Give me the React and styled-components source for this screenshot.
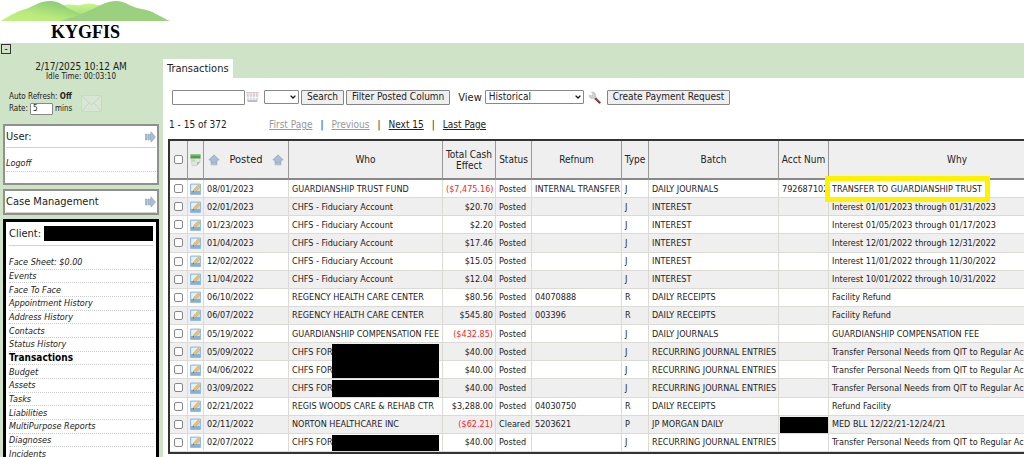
import React from 'react'
import styled, { createGlobalStyle } from 'styled-components'

const GlobalStyle = createGlobalStyle`
  * {
    box-sizing: border-box;
  }
  body {
    margin: 0;
    overflow: hidden;
    background: #cfe3c7;
    color: #222;
    font-family: 'DejaVu Sans Condensed', 'DejaVu Sans', Verdana, sans-serif;
    font-stretch: condensed;
    font-size: 10px;
  }
  button, input, select {
    font: inherit;
    color: inherit;
    margin: 0;
  }
`

const Page = styled.div`
  display: flex;
  flex-direction: column;
  height: 100vh;
  overflow: hidden;
`

const Header = styled.header`
  flex: none;
  height: 43px;
  background: #fff;
`

const Brand = styled.div`
  width: 171px;
  text-align: center;
`

const Hills = styled.svg`
  display: block;
  width: 171px;
  height: 22px;
`

const BrandName = styled.h1`
  margin: 0;
  color: #000;
  font: bold 18px/21px 'Liberation Serif', 'Times New Roman', serif;
`

const Body = styled.div`
  display: flex;
  flex: 1;
  min-height: 0;
`

const Sidebar = styled.aside`
  flex: none;
  width: 163px;
  padding: 1px 4px 0 3px;
`

const Collapse = styled.button`
  display: flex;
  align-items: center;
  justify-content: center;
  width: 10px;
  height: 10px;
  margin-left: -2px;
  padding: 0;
  border: 1px solid #333;
  background: transparent;
  line-height: 8px;
`

const Clock = styled.div`
  padding-top: 6px;
  text-align: center;
  font-size: 10px;
  line-height: 13px;
`

const Idle = styled.div`
  font-size: 8px;
  line-height: 8px;
`

const Refresh = styled.div`
  display: flex;
  align-items: center;
  gap: 9px;
  height: 26px;
  margin: 9px 0 8px 6px;
  font-size: 8px;
  line-height: 12px;
`

const RateLabel = styled.label`
  display: flex;
  align-items: center;
  gap: 2px;
`

const RateInput = styled.input`
  width: 23px;
  height: 12px;
  padding: 0 2px;
  border: 1px solid #888;
  border-radius: 1px;
  background: #fff;
`

const Box = styled.section`
  margin-bottom: 4px;
  padding: ${p => (p.$active ? '0 3px' : '0 1px')};
  border: ${p => (p.$active ? '3px solid #000' : '2px solid #8e918c')};
  background: #fff;
`

const BoxTitle = styled.h2`
  display: flex;
  align-items: center;
  justify-content: space-between;
  height: ${p => (p.$tall ? 24 : 22)}px;
  margin: 0;
  border-bottom: 1px solid #d6d2cb;
  font-size: 11px;
  font-weight: normal;
`

const ClientMask = styled.span`
  width: 109px;
  height: 15px;
  background: #000;
`

const UserMenu = styled.div`
  padding: 9px 0 11px;
`

const Menu = styled.ul`
  display: grid;
  grid-auto-rows: 1fr;
  height: 205px;
  margin: 10px 0 0;
  padding: 0;
  list-style: none;
`

const MenuItem = styled.li`
  display: flex;
  align-items: center;
  min-height: 0;
  border-bottom: 1px dotted #ccc;
`

const MenuLink = styled.a`
  color: ${p => (p.$current ? '#000' : '#222')};
  font-size: ${p => (p.$current ? 10 : 9)}px;
  font-style: ${p => (p.$current ? 'normal' : 'italic')};
  font-weight: ${p => (p.$current ? 'bold' : 'normal')};
  line-height: 12px;
  text-decoration: none;
`

const LogoffLink = styled(MenuLink)`
  display: block;
  padding-bottom: 2px;
  border-bottom: 1px dotted #ccc;
`

const Main = styled.main`
  display: flex;
  flex: 1;
  flex-direction: column;
  min-width: 0;
  padding-top: 16px;
`

const Tab = styled.div`
  align-self: flex-start;
  height: 19px;
  padding: 0 4px;
  background: #fff;
  font-size: 11px;
  line-height: 20px;
`

const Panel = styled.div`
  flex: 1;
  padding: 11px 0 0 5px;
  background: #fff;
`

const Toolbar = styled.form`
  display: flex;
  align-items: center;
  height: 16px;
  padding-left: 4px;
`

const FilterInput = styled.input`
  width: 73px;
  height: 15px;
  padding: 0 2px;
  border: 1px solid #888;
  border-radius: 1px;
`

const IconSlot = styled.span`
  display: flex;
  margin: ${p => p.$margin || 0};
`

const Select = styled.select`
  appearance: none;
  width: ${p => p.$width}px;
  height: 14px;
  padding: 0 3px;
  border: 1px solid #888;
  border-radius: 1px;
  background: #fff url("data:image/svg+xml,%3Csvg xmlns='http://www.w3.org/2000/svg' viewBox='0 0 6 4'%3E%3Cpath d='M.6.6 3 3 5.4.6' fill='none' stroke='%23111' stroke-width='1.3'/%3E%3C/svg%3E") no-repeat right 2px center / 6px 4px;
  font-size: 10px;
  line-height: 12px;
`

const Button = styled.button`
  height: 15px;
  margin-left: ${p => p.$gap}px;
  padding: 0 5px;
  border: 1px solid #858585;
  border-radius: 1px;
  background: #efefef;
  line-height: 12px;
  white-space: nowrap;
`

const ViewLabel = styled.label`
  display: flex;
  align-items: center;
  gap: 3px;
  margin-left: 8px;
  font-size: 11px;
`

const Pager = styled.nav`
  display: flex;
  gap: 8px;
  height: 34px;
  padding: 13px 0 0 1px;
  line-height: 14px;
`

const Count = styled.span`
  width: 92px;
`

const PageLink = styled.a`
  color: ${p => (p.$muted ? '#999' : '#222')};
`

const TableWrap = styled.div`
  overflow: hidden;
`

const Table = styled.table`
  width: max(100%, 920px);
  height: 315px;
  table-layout: fixed;
  border-collapse: separate;
  border-spacing: 0;
  border: 2px solid #333;
  font-size: 9px;
  line-height: 12px;
`

const Col = styled.col`
  width: ${p => (p.$width ? `${p.$width}px` : 'auto')};
`

const Th = styled.th`
  height: 39px;
  padding: 0 1px;
  border-right: 1px solid #999;
  border-bottom: 2px solid #888;
  background: #efefef;
  font-size: 10px;
  font-weight: normal;
  line-height: 11px;
`

const Posted = styled.div`
  display: flex;
  align-items: center;
  justify-content: space-between;
  padding: 0 3px;
  font-size: 11px;
`

const Row = styled.tr`
  background: ${p => (p.$shaded ? '#efefef' : '#fff')};
`

const Td = styled.td`
  position: relative;
  padding: 0 2px 0 3px;
  border-right: 1px solid #dcdad5;
  border-bottom: 1px solid #dcdad5;
  color: ${p => (p.$negative ? '#f22' : 'inherit')};
  text-align: ${p => p.$align || 'left'};
  white-space: nowrap;
`

const IconTd = styled(Td)`
  padding: 0;
  text-align: center;
`

const Check = styled.input`
  appearance: none;
  display: block;
  width: 9px;
  height: 9px;
  margin: 0 auto;
  border: 1px solid #888;
  border-radius: 2px;
  background: #fff;
`

const Icon = styled.svg`
  display: block;
  flex: none;
  margin: 0 auto;
`

// black block lying over a private value; it can span several rows
const Mask = styled.span`
  position: absolute;
  z-index: 1;
  top: 1px;
  left: ${p => p.$left}px;
  width: ${p => p.$width}px;
  height: ${p => p.$height}px;
  background: #000;
`

const Highlight = styled.span`
  position: absolute;
  z-index: 1;
  top: -4px;
  left: -4px;
  width: 165px;
  height: 26px;
  border: 5px solid #fff200;
`

const columns = [18, 16, 85, 154, 53, 36, 90, 27, 130, 50, null]

const QIT = 'Transfer Personal Needs from QIT to Regular Account'
const RECURRING = 'RECURRING JOURNAL ENTRIES'

const rows = [
  { date: '08/01/2023', who: 'GUARDIANSHIP TRUST FUND', cash: '($7,475.16)', ref: 'INTERNAL TRANSFER', type: 'J', batch: 'DAILY JOURNALS', acct: '792687102', why: 'TRANSFER TO GUARDIANSHIP TRUST', highlight: true },
  { date: '02/01/2023', who: 'CHFS - Fiduciary Account', cash: '$20.70', type: 'J', batch: 'INTEREST', why: 'Interest 01/01/2023 through 01/31/2023' },
  { date: '01/23/2023', who: 'CHFS - Fiduciary Account', cash: '$2.20', type: 'J', batch: 'INTEREST', why: 'Interest 01/05/2023 through 01/17/2023' },
  { date: '01/04/2023', who: 'CHFS - Fiduciary Account', cash: '$17.46', type: 'J', batch: 'INTEREST', why: 'Interest 12/01/2022 through 12/31/2022' },
  { date: '12/02/2022', who: 'CHFS - Fiduciary Account', cash: '$15.05', type: 'J', batch: 'INTEREST', why: 'Interest 11/01/2022 through 11/30/2022' },
  { date: '11/04/2022', who: 'CHFS - Fiduciary Account', cash: '$12.04', type: 'J', batch: 'INTEREST', why: 'Interest 10/01/2022 through 10/31/2022' },
  { date: '06/10/2022', who: 'REGENCY HEALTH CARE CENTER', cash: '$80.56', ref: '04070888', type: 'R', batch: 'DAILY RECEIPTS', why: 'Facility Refund' },
  { date: '06/07/2022', who: 'REGENCY HEALTH CARE CENTER', cash: '$545.80', ref: '003396', type: 'R', batch: 'DAILY RECEIPTS', why: 'Facility Refund' },
  { date: '05/19/2022', who: 'GUARDIANSHIP COMPENSATION FEE', cash: '($432.85)', type: 'J', batch: 'DAILY JOURNALS', why: 'GUARDIANSHIP COMPENSATION FEE' },
  { date: '05/09/2022', who: 'CHFS FOR', mask: 34, cash: '$40.00', type: 'J', batch: RECURRING, why: QIT },
  { date: '04/06/2022', who: 'CHFS FOR', cash: '$40.00', type: 'J', batch: RECURRING, why: QIT },
  { date: '03/09/2022', who: 'CHFS FOR', mask: 17, cash: '$40.00', type: 'J', batch: RECURRING, why: QIT },
  { date: '02/21/2022', who: 'REGIS WOODS CARE & REHAB CTR', cash: '$3,288.00', ref: '04030750', type: 'R', batch: 'DAILY RECEIPTS', why: 'Refund Facility' },
  { date: '02/11/2022', who: 'NORTON HEALTHCARE INC', cash: '($62.21)', status: 'Cleared', ref: '5203621', type: 'P', batch: 'JP MORGAN DAILY', acctMask: true, why: 'MED BLL 12/22/21-12/24/21' },
  { date: '02/07/2022', who: 'CHFS FOR', mask: 16, cash: '$40.00', type: 'J', batch: RECURRING, why: QIT },
]

const menu = [
  'Face Sheet: $0.00', 'Events', 'Face To Face', 'Appointment History', 'Address History',
  'Contacts', 'Status History', 'Transactions', 'Budget', 'Assets', 'Tasks', 'Liabilities',
  'MultiPurpose Reports', 'Diagnoses', 'Incidents',
]

const Logo = () => (
  <Hills viewBox="0 0 171 22" aria-hidden="true">
    <defs>
      <linearGradient id="left" x1="0" y1="1" x2="1" y2="0">
        <stop offset="0" stopColor="#c3f07f" />
        <stop offset=".35" stopColor="#b9ea7c" />
        <stop offset=".75" stopColor="#8fcd78" />
      </linearGradient>
      <linearGradient id="mid" x1="0" y1="0" x2="0" y2="1">
        <stop offset="0" stopColor="#c9f58a" />
        <stop offset="1" stopColor="#a0d67f" />
      </linearGradient>
    </defs>
    <path d="M58 8C66 2 74 6 80 5c6-2 12-2 18 0l10 2-24 12H50z" fill="url(#mid)" />
    <path d="M1 21C12 14 18 11 26 9 36 5 40 1 50 1c10 0 14 6 24 10 8 4 12 5 20 10z" fill="url(#left)" />
    <path d="M60 21c14-4 20-6 28-10C100 6 104 2 115 1c12 0 16 7 27 8 12 2 16 7 28 12z" fill="#9ad07e" />
  </Hills>
)

const RightArrow = () => (
  <svg width="11" height="12" viewBox="0 0 11 12" aria-hidden="true">
    <path d="M.5 3h1.5v6H.5zM3 3h1.2v6H3zM5 3h1V.8L10.5 6 6 11.2V9H5z" fill="#a9bdd6" stroke="#8ea2be" strokeWidth=".6" />
  </svg>
)

const UpArrow = () => (
  <svg width="12" height="12" viewBox="0 0 12 12" aria-hidden="true">
    <path d="M6 .8 11.200 6H9v2.500H3V6H.8z" fill="#a9bdd6" stroke="#8ea2be" strokeWidth=".7" />
    <path d="M3 9.300h6v1.600H3z" fill="#b7c7dc" stroke="#8ea2be" strokeWidth=".5" />
  </svg>
)

const Envelope = () => (
  <svg width="21" height="17" viewBox="0 0 21 17" aria-hidden="true">
    <path d="M.5.5h20v16H.5z" fill="#d9e6d5" stroke="#cbdac7" />
    <path d="m1 1 9.500 9L20 1M1 16l7-8M20 16l-7-8" fill="none" stroke="#c0d0bc" strokeWidth=".8" />
  </svg>
)

const Calendar = () => (
  <svg width="13" height="12" viewBox="0 0 13 12" aria-hidden="true">
    <path d="M.5 1h12l-.4 8-1.500 2H2L.9 9z" fill="#dddde4" />
    <path d="M.5 1.500h12M.8 4h11.400" stroke="#dfb9b9" strokeDasharray="1.500 .7" />
    <path d="M3.500 2v7M6.500 2v7M9.500 2v7M1 6.500h11" stroke="#fff" strokeWidth=".6" />
    <path d="M1 9.300h11l-1.500 1.700H2z" fill="#b5b8c8" />
  </svg>
)

const Wrench = () => (
  <svg width="13" height="13" viewBox="0 0 13 13" aria-hidden="true">
    <path d="M3.500 1 5 3 3.800 4.800 1 4.200C.9 6.600 3 8 5.300 7.200L7 8.800 8.800 7 7.500 5.300C8.300 3 6.600.6 3.500 1z" fill="#cfcfd2" stroke="#b5b5b5" strokeWidth=".5" />
    <path d="m8 8 3.500 3.500" stroke="#7c3a33" strokeWidth="2.400" strokeLinecap="round" />
    <path d="m8.500 8 2.500 2.500" stroke="#b88" strokeWidth=".6" />
  </svg>
)

const SheetIcon = () => (
  <Icon width="11" height="12" viewBox="0 0 11 12" aria-hidden="true">
    <path d="M1 3h9v5l-3 3.500H2z" fill="#e0e5e0" stroke="#b9beb9" strokeWidth=".5" />
    <path d="M.5.500h10v4H.5z" fill="#4f9d50" />
    <path d="M.5.500h10v1.300H.5z" fill="#7fbf78" />
    <path d="M2 5.500h3v2H2z" fill="#b9d8b8" />
    <path d="m7 11.300.2-3 2.800-.3z" fill="#aab0aa" />
  </Icon>
)

const EditIcon = () => (
  <Icon width="11" height="12" viewBox="0 0 11 12" aria-hidden="true">
    <path d="M.5 1h10v10.500H.5z" fill="#c3def6" stroke="#86b0da" strokeWidth=".8" />
    <path d="M1 8h9v3H1z" fill="#7fb2e3" />
    <path d="M1.500 2h6l-5 6h-1z" fill="#e4f1fc" />
    <path d="m2.800 9.300.7-2.500L8.400 2l1.900 1.800L5.300 8.600z" fill="#f2c160" stroke="#c4963f" strokeWidth=".4" />
    <path d="m2.800 9.300.4-1.300.9.900z" fill="#444" />
  </Icon>
)

const Transaction = ({ row, shaded }) => (
  <Row $shaded={shaded}>
    <IconTd><Check type="checkbox" aria-label={`Select ${row.date}`} /></IconTd>
    <IconTd><EditIcon /></IconTd>
    <Td>{row.date}</Td>
    <Td>
      {row.who}
      {row.mask && <Mask $left={43} $width={107} $height={row.mask} />}
    </Td>
    <Td $align="right" $negative={row.cash[0] === '('}>{row.cash}</Td>
    <Td>{row.status || 'Posted'}</Td>
    <Td>{row.ref}</Td>
    <Td>{row.type}</Td>
    <Td>{row.batch}</Td>
    <Td>
      {row.acct}
      {row.acctMask && <Mask $left={1} $width={48} $height={16} />}
    </Td>
    <Td>
      {row.why}
      {row.highlight && <Highlight />}
    </Td>
  </Row>
)

const TransactionTable = () => (
  <TableWrap>
    <Table>
      <colgroup>
        {columns.map((width, key) => <Col key={key} $width={width} />)}
      </colgroup>
      <thead>
        <tr>
          <Th><Check type="checkbox" aria-label="Select all" /></Th>
          <Th><SheetIcon /></Th>
          <Th>
            <Posted><UpArrow />Posted<UpArrow /></Posted>
          </Th>
          <Th>Who</Th>
          <Th>Total Cash Effect</Th>
          <Th>Status</Th>
          <Th>Refnum</Th>
          <Th>Type</Th>
          <Th>Batch</Th>
          <Th>Acct Num</Th>
          <Th>Why</Th>
        </tr>
      </thead>
      <tbody>
        {rows.map((row, key) => <Transaction key={key} row={row} shaded={key % 2 === 1} />)}
      </tbody>
    </Table>
  </TableWrap>
)

const SideNav = () => (
  <Sidebar>
    <Collapse type="button" aria-label="Collapse">-</Collapse>
    <Clock>
      2/17/2025 10:12 AM
      <Idle>Idle Time: 00:03:10</Idle>
    </Clock>
    <Refresh>
      <div>
        Auto Refresh: <b>Off</b>
        <RateLabel>Rate: <RateInput defaultValue="5" /> mins</RateLabel>
      </div>
      <Envelope />
    </Refresh>
    <Box>
      <BoxTitle>User: <RightArrow /></BoxTitle>
      <UserMenu><LogoffLink href="#logoff">Logoff</LogoffLink></UserMenu>
    </Box>
    <Box>
      <BoxTitle>Case Management <RightArrow /></BoxTitle>
    </Box>
    <Box $active>
      <BoxTitle $tall>Client: <ClientMask /></BoxTitle>
      <Menu>
        {menu.map(name => (
          <MenuItem key={name}>
            <MenuLink href="#" $current={name === 'Transactions'}>{name}</MenuLink>
          </MenuItem>
        ))}
      </Menu>
    </Box>
  </Sidebar>
)

const App = () => (
  <Page>
    <GlobalStyle />
    <Header>
      <Brand>
        <Logo />
        <BrandName>KYGFIS</BrandName>
      </Brand>
    </Header>
    <Body>
      <SideNav />
      <Main>
        <Tab>Transactions</Tab>
        <Panel>
          <Toolbar onSubmit={e => e.preventDefault()}>
            <FilterInput aria-label="Posted date" />
            <IconSlot $margin="0 5px 0 1px"><Calendar /></IconSlot>
            <Select $width={35} aria-label="Operator"><option></option></Select>
            <Button $gap={2}>Search</Button>
            <Button $gap={2} type="button">Filter Posted Column</Button>
            <ViewLabel>
              View
              <Select $width={99}><option>Historical</option></Select>
            </ViewLabel>
            <IconSlot $margin="0 0 0 4px"><Wrench /></IconSlot>
            <Button $gap={6} type="button">Create Payment Request</Button>
          </Toolbar>
          <Pager>
            <Count>1 - 15 of 372</Count>
            <PageLink href="#first" $muted>First Page</PageLink>|
            <PageLink href="#previous" $muted>Previous</PageLink>|
            <PageLink href="#next">Next 15</PageLink>|
            <PageLink href="#last">Last Page</PageLink>
          </Pager>
          <TransactionTable />
        </Panel>
      </Main>
    </Body>
  </Page>
)

export default App
